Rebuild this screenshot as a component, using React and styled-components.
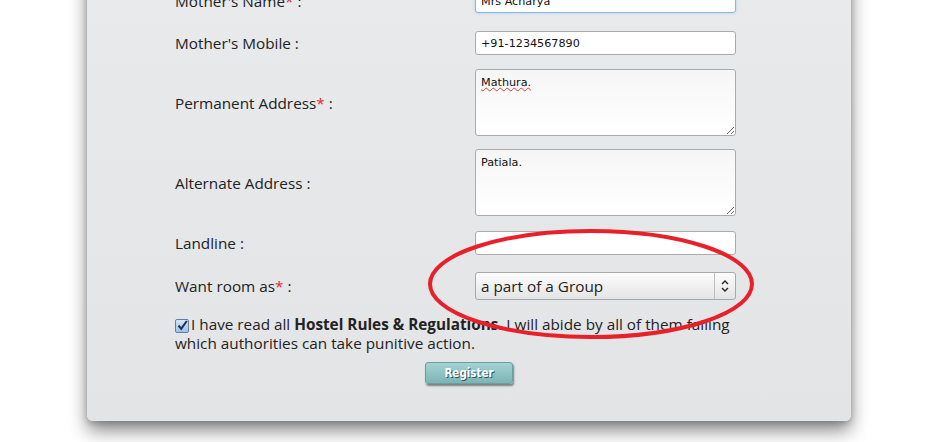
import React from "react";
import styled, { createGlobalStyle } from "styled-components";

const GlobalStyle = createGlobalStyle`
    html, body {
        margin: 0;
        padding: 0;
        background: #ffffff;
        overflow: hidden;
    }
`;

const Page = styled.div`
    position: relative;
    width: 927px;
    height: 442px;
    overflow: hidden;
    font-family: "Open Sans", "Noto Sans", sans-serif;
`;

const Card = styled.div`
    margin: -30px 0 0 87px;
    width: 764px;
    box-sizing: border-box;
    padding: 19px 0 37px 88px;
    background: linear-gradient(to bottom, #e9eaec, #e3e4e6);
    border-radius: 0 0 6px 6px;
    box-shadow: 0 10px 18px rgba(0, 0, 0, 0.45), 0 2px 6px rgba(0, 0, 0, 0.2);
`;

const Row = styled.div`
    display: grid;
    grid-template-columns: 300px 261px;
    align-items: center;
    margin-top: ${(p) => p.$space || 0}px;
`;

const Label = styled.label`
    font-size: 15.3px;
    color: #222;
`;

const Star = styled.span`
    color: #e3262c;
`;

const TextInput = styled.input`
    box-sizing: border-box;
    width: 261px;
    height: 24px;
    padding: 0 5px;
    border: 1px solid ${(p) => (p.$focus ? "#8db6de" : "#ababab")};
    border-radius: 3px;
    background: #fff;
    font-family: "DejaVu Sans", sans-serif;
    font-size: 11.2px;
    color: #111;
    outline: none;
    box-shadow: ${(p) => (p.$focus ? "0 0 3px #a9cdf0" : "none")};
`;

const TextArea = styled.textarea`
    box-sizing: border-box;
    width: 261px;
    height: 67px;
    padding: 6px 5px;
    border: 1px solid #ababab;
    border-radius: 3px;
    background: linear-gradient(to bottom, #f6f6f6, #ffffff);
    font-family: "DejaVu Sans", sans-serif;
    font-size: 11.2px;
    color: #111;
    outline: none;
    display: block;
    text-decoration: ${(p) => (p.$spell ? "underline wavy #e03a3a" : "none")};
    text-decoration-thickness: 1px;
`;

const SelectBox = styled.div`
    box-sizing: border-box;
    width: 261px;
    height: 28px;
    display: flex;
    border: 1px solid #a8a8a8;
    border-radius: 3px;
    background: linear-gradient(to bottom, #fdfdfd, #e4e4e4);
`;

const Select = styled.select`
    flex: 1;
    appearance: none;
    border: none;
    background: transparent;
    padding: 0 5px;
    font-family: "Open Sans", "Noto Sans", sans-serif;
    font-size: 15.3px;
    color: #222;
    outline: none;
`;

const ArrowCell = styled.div`
    width: 20px;
    border-left: 1px solid #bdbdbd;
    display: flex;
    align-items: center;
    justify-content: center;
`;

const Consent = styled.p`
    margin: 15px 0 0 0;
    width: 600px;
    font-size: 15.3px;
    line-height: 19px;
    color: #222;
`;

const CheckBox = styled.span`
    display: inline-flex;
    align-items: center;
    justify-content: center;
    width: 12px;
    height: 12px;
    margin-right: 2px;
    vertical-align: -1px;
    border: 1px solid #5f7fa6;
    border-radius: 2px;
    background: linear-gradient(to bottom, #d5e6f7, #9fc2e6);
`;

const ButtonRow = styled.div`
    display: flex;
    justify-content: center;
    margin: 9px 0 0 -88px;
`;

const Button = styled.button`
    width: 88px;
    height: 22px;
    padding: 0;
    border: 1px solid #6d9e9f;
    border-radius: 3px;
    background: linear-gradient(to bottom, #a3d3d3, #7db4b4);
    box-shadow: 1px 2px 2px rgba(0, 0, 0, 0.45);
    color: #fff;
    font-family: "DejaVu Sans Condensed", "Liberation Sans Narrow", sans-serif;
    font-weight: bold;
    font-size: 11.5px;
    text-shadow: 1px 1px 0 #2f5555;
`;

const Annotation = styled.svg`
    position: absolute;
    left: 424px;
    top: 226px;
    width: 336px;
    height: 118px;
    pointer-events: none;
`;

function Arrows() {
    return (
        <svg width="10" height="14" viewBox="0 0 10 14">
            <path d="M2 5 L5 2 L8 5" fill="none" stroke="#222" strokeWidth="1.4" />
            <path d="M2 9 L5 12 L8 9" fill="none" stroke="#222" strokeWidth="1.4" />
        </svg>
    );
}

function App() {
    return (
        <Page>
            <GlobalStyle />
            <Card>
                <Row>
                    <Label>
                        Mother's Name<Star>*</Star> :
                    </Label>
                    <TextInput $focus defaultValue="Mrs Acharya" />
                </Row>
                <Row $space={18}>
                    <Label>Mother's Mobile :</Label>
                    <TextInput defaultValue="+91-1234567890" />
                </Row>
                <Row $space={14}>
                    <Label>
                        Permanent Address<Star>*</Star> :
                    </Label>
                    <TextArea $spell defaultValue="Mathura." />
                </Row>
                <Row $space={13}>
                    <Label>Alternate Address :</Label>
                    <TextArea defaultValue="Patiala." />
                </Row>
                <Row $space={15}>
                    <Label>Landline :</Label>
                    <TextInput defaultValue="" />
                </Row>
                <Row $space={17}>
                    <Label>
                        Want room as<Star>*</Star> :
                    </Label>
                    <SelectBox>
                        <Select defaultValue="group">
                            <option value="single">a single occupant</option>
                            <option value="group">a part of a Group</option>
                        </Select>
                        <ArrowCell>
                            <Arrows />
                        </ArrowCell>
                    </SelectBox>
                </Row>
                <Consent>
                    <CheckBox>
                        <svg width="11" height="11" viewBox="0 0 11 11">
                            <path d="M1.5 5.5 L4.2 8.8 L9.8 1" fill="none" stroke="#1c2f55" strokeWidth="2" />
                        </svg>
                    </CheckBox>
                    I have read all <b>Hostel Rules &amp; Regulations</b>. I will abide by all of them failing
                    <br />
                    which authorities can take punitive action.
                </Consent>
                <ButtonRow>
                    <Button>Register</Button>
                </ButtonRow>
            </Card>
            <Annotation viewBox="0 0 336 118">
                <ellipse cx="167" cy="58" rx="161" ry="53" fill="none" stroke="#e8202a" strokeWidth="4" />
            </Annotation>
        </Page>
    );
}

export default App;
